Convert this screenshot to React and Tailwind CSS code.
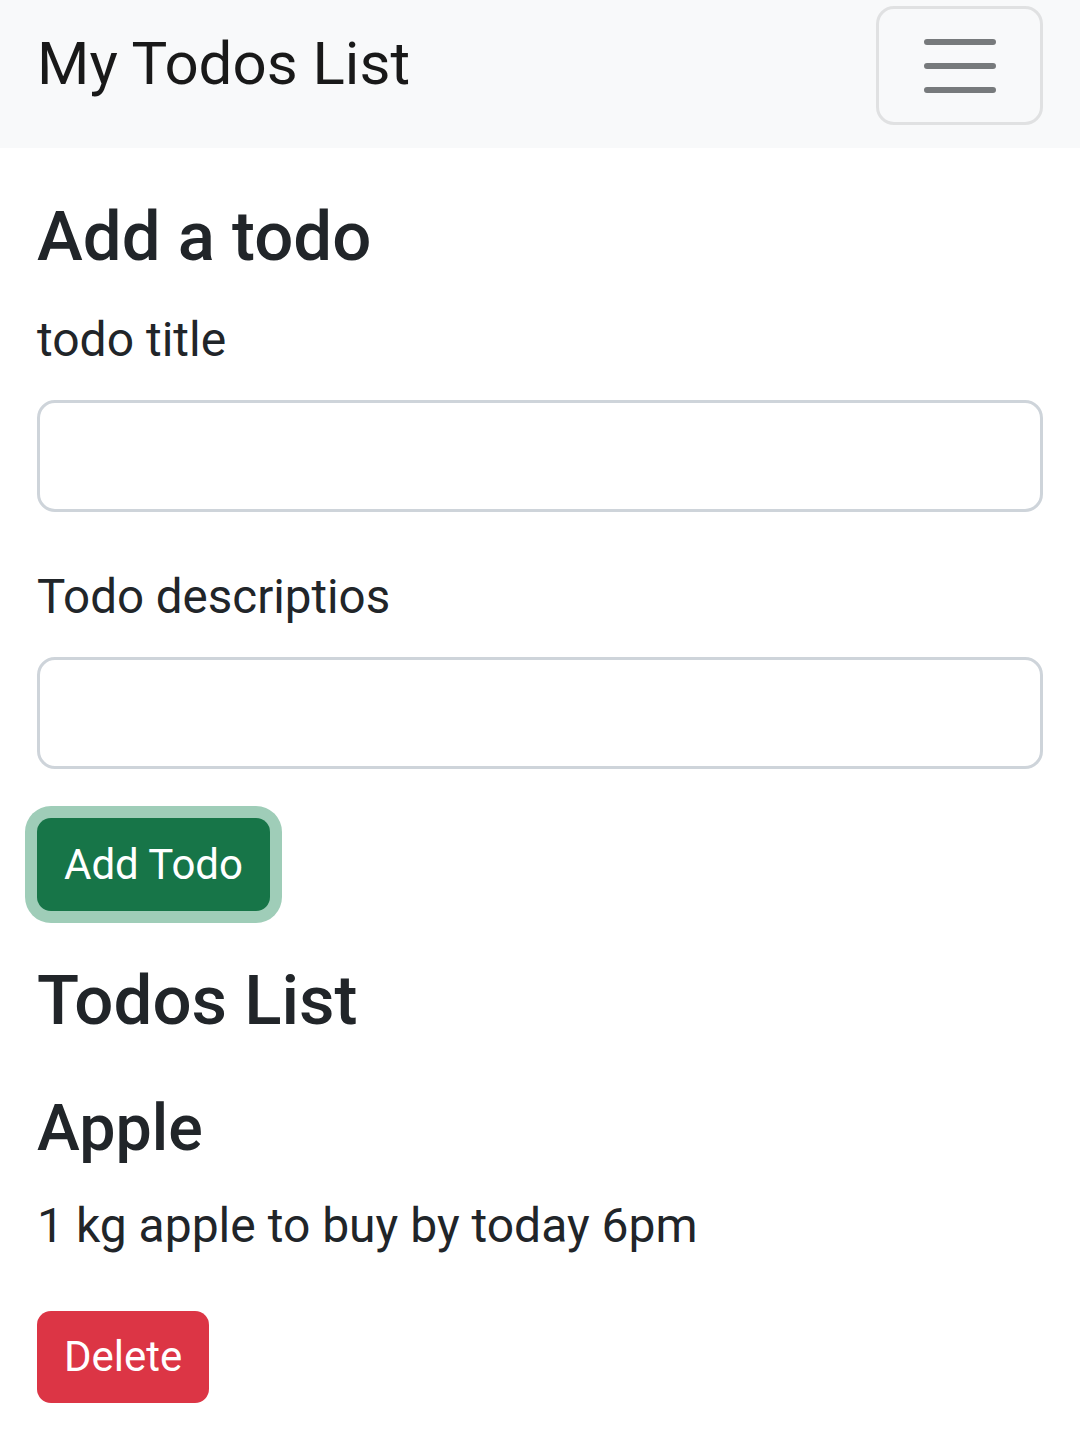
export default function App() {
  return (
    <div className="min-h-screen bg-white text-[#212529]" style={{ fontFamily: 'Roboto, "Liberation Sans", sans-serif' }}>
      {/* navbar */}
      <nav className="h-[148px] bg-[#f8f9fa] flex items-start justify-between pl-[37px] pr-[37px]">
        <a className="text-[60px] leading-[90px] mt-[19px] font-normal text-[#000000e6]">My Todos List</a>
        <button className="mt-[6px] w-[167px] h-[119px] border-[3px] border-[#e0e1e2] rounded-[18px] flex items-center justify-center">
          <svg width="90" height="90" viewBox="0 0 30 30">
            <path d="M4 7h22M4 15h22M4 23h22" stroke="#777a7c" strokeWidth="2" strokeLinecap="round" />
          </svg>
        </button>
      </nav>

      <div className="px-[37px]">
        <h2 className="text-[69px] leading-[90px] font-medium pt-[44px]">Add a todo</h2>

        <form className="mt-[22px]">
          <label className="block text-[48px] leading-[72px]">todo title</label>
          <input className="block mt-[24px] w-full h-[112px] border-[3px] border-[#ced4da] rounded-[18px] px-[36px] text-[48px] outline-none" />

          <label className="block text-[47.5px] leading-[72px] mt-[49px]">Todo descriptios</label>
          <input className="block mt-[24px] w-full h-[112px] border-[3px] border-[#ced4da] rounded-[18px] px-[36px] text-[48px] outline-none" />

          <button type="button" className="mt-[49px] h-[93px] px-[27px] rounded-[14px] bg-[#177548] text-white text-[42px] leading-none ring-[12px] ring-[#9fcdb8]">
            Add Todo
          </button>
        </form>

        <h2 className="text-[69px] leading-[90px] font-medium mt-[45px]">Todos List</h2>

        <div className="mt-[40px]">
          <h3 className="text-[64.5px] leading-[84px] font-medium">Apple</h3>
          <p className="text-[48px] leading-[72px] mt-[20px]">1 kg apple to buy by today 6pm</p>
          <button type="button" className="mt-[49px] h-[92px] px-[27px] rounded-[14px] bg-[#dc3545] text-white text-[42px] leading-none">
            Delete
          </button>
        </div>
      </div>
    </div>
  );
}
